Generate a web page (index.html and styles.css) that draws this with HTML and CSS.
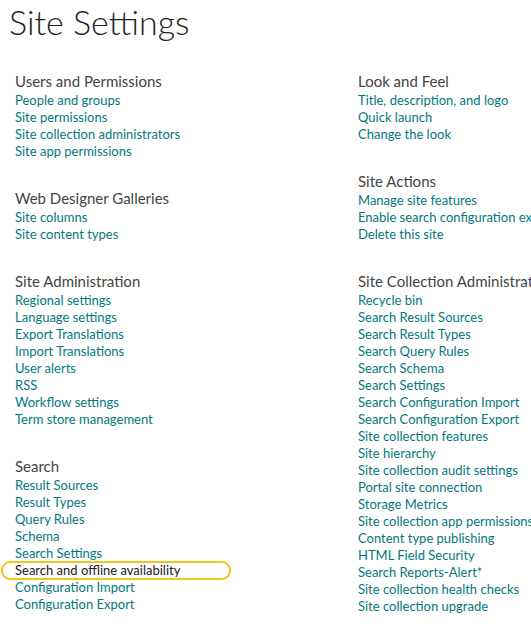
FILE: index.html
```html
<!DOCTYPE html>
<html>
<head>
<meta charset="utf-8">
<link rel="stylesheet" href="styles.css">
</head>
<body>
<h1 class="title">Site Settings</h1>
<div class="columns">
  <div class="col">
    <section class="group">
      <h2>Users and Permissions</h2>
      <a href="#">People and groups</a>
      <a href="#">Site permissions</a>
      <a href="#">Site collection administrators</a>
      <a href="#">Site app permissions</a>
    </section>
    <section class="group">
      <h2>Web Designer Galleries</h2>
      <a href="#">Site columns</a>
      <a href="#">Site content types</a>
    </section>
    <section class="group">
      <h2>Site Administration</h2>
      <a href="#">Regional settings</a>
      <a href="#">Language settings</a>
      <a href="#">Export Translations</a>
      <a href="#">Import Translations</a>
      <a href="#">User alerts</a>
      <a href="#">RSS</a>
      <a href="#">Workflow settings</a>
      <a href="#">Term store management</a>
    </section>
    <section class="group">
      <h2>Search</h2>
      <a href="#">Result Sources</a>
      <a href="#">Result Types</a>
      <a href="#">Query Rules</a>
      <a href="#">Schema</a>
      <a href="#">Search Settings</a>
      <a href="#" class="highlight">Search and offline availability</a>
      <a href="#">Configuration Import</a>
      <a href="#">Configuration Export</a>
    </section>
  </div>
  <div class="col">
    <section class="group">
      <h2>Look and Feel</h2>
      <a href="#">Title, description, and logo</a>
      <a href="#">Quick launch</a>
      <a href="#">Change the look</a>
    </section>
    <section class="group">
      <h2>Site Actions</h2>
      <a href="#">Manage site features</a>
      <a href="#">Enable search configuration export</a>
      <a href="#">Delete this site</a>
    </section>
    <section class="group">
      <h2>Site Collection Administration</h2>
      <a href="#">Recycle bin</a>
      <a href="#">Search Result Sources</a>
      <a href="#">Search Result Types</a>
      <a href="#">Search Query Rules</a>
      <a href="#">Search Schema</a>
      <a href="#">Search Settings</a>
      <a href="#">Search Configuration Import</a>
      <a href="#">Search Configuration Export</a>
      <a href="#">Site collection features</a>
      <a href="#">Site hierarchy</a>
      <a href="#">Site collection audit settings</a>
      <a href="#">Portal site connection</a>
      <a href="#">Storage Metrics</a>
      <a href="#">Site collection app permissions</a>
      <a href="#">Content type publishing</a>
      <a href="#">HTML Field Security</a>
      <a href="#">Search Reports-Alert*</a>
      <a href="#">Site collection health checks</a>
      <a href="#">Site collection upgrade</a>
    </section>
  </div>
</div>
</body>
</html>
```
FILE: styles.css
```css
html, body {
  margin: 0;
  padding: 0;
  background: #fff;
  overflow: hidden;
}
body {
  font-family: "Lato", "Open Sans", sans-serif;
  width: 531px;
  height: 631px;
}
.title {
  margin: 0;
  padding: 0 0 0 9px;
  font-size: 34px;
  font-weight: 300;
  color: #222;
  line-height: 44px;
}
.columns {
  display: grid;
  grid-template-columns: 343px 1fr;
  padding: 28px 0 0 15px;
  white-space: nowrap;
}
.col {
  display: flex;
  flex-direction: column;
  min-width: 0;
}
.group {
  display: flex;
  flex-direction: column;
  margin-bottom: 29px;
  align-items: flex-start;
}
.group h2 {
  margin: 0 0 1px 0;
  font-size: 15px;
  font-weight: 400;
  color: #444;
  line-height: 19px;
}
.group a {
  font-size: 13px;
  line-height: 17px;
  color: #03787c;
  text-decoration: none;
}
.group a.highlight {
  color: #222;
  position: relative;
}
.group a.highlight::after {
  content: "";
  position: absolute;
  left: -14px;
  right: -51px;
  top: -1px;
  bottom: -1px;
  border: 2px solid #f5c518;
  border-radius: 9px;
}
```
